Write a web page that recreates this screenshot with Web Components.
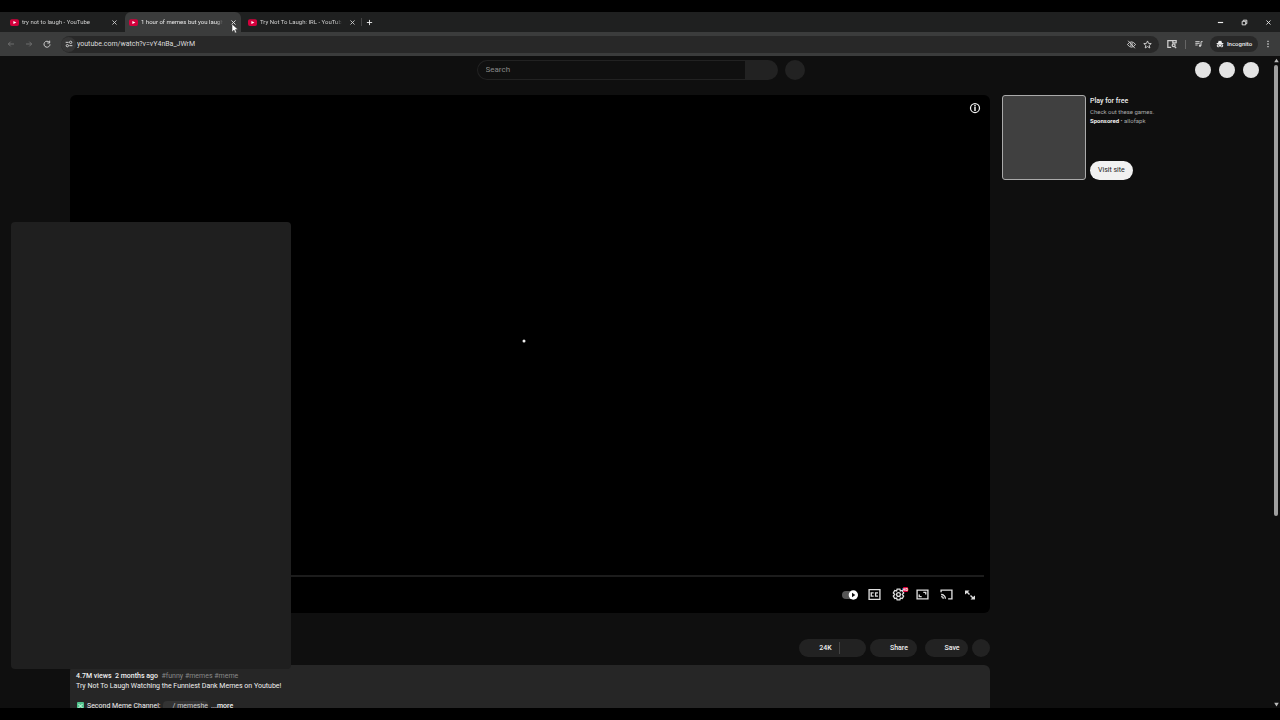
<!DOCTYPE html>
<html lang="en">
<head>
<meta charset="utf-8">
<title>Browser window</title>
<style>
html, body { margin: 0; height: 100%; background: #000; }
body { font-family: Roboto, "Liberation Sans", sans-serif; color: #f1f1f1; }
</style>
</head>
<body>
<browser-window></browser-window>
<script>
const define = (name, html, setup) => customElements.define(name, class extends HTMLElement {
  connectedCallback() {
    if (this.shadowRoot) return;
    const t = document.createElement('template');
    t.innerHTML = html;
    this.attachShadow({ mode: 'open' }).append(t.content.cloneNode(true));
    if (setup) setup(this, this.shadowRoot);
  }
});

const stroke = (d, w = 2) => `<path d="${d}" fill="none" stroke="currentColor" stroke-width="${w}"/>`;
const fill = d => `<path d="${d}" fill="currentColor" fill-rule="evenodd"/>`;
const ICONS = {
  youtube: '<rect x="0" y="3" width="24" height="18" rx="5" fill="#d4003c"/><path d="M9 8l8 4-8 4z" fill="#fff"/>',
  close: stroke('M5 5l14 14M19 5L5 19', 3),
  plus: stroke('M12 3v18M3 12h18', 3),
  minimize: stroke('M3 12h18', 4),
  restore: stroke('M4 8h12v12H4zM8 7V4h12v12h-3', 3),
  back: stroke('M21 12H4M11 5l-7 7 7 7', 2.5),
  forward: stroke('M3 12h17M13 5l7 7-7 7', 2.5),
  reload: stroke('M19 7a9 9 0 1 0 2 6M20 2v7h-7', 3),
  tune: stroke('M2 7h9M13 17h9', 3) + '<g fill="none" stroke="currentColor" stroke-width="3"><circle cx="17" cy="7" r="3.5"/><circle cx="7" cy="17" r="3.5"/></g>',
  eyeoff: stroke('M1 12q11-14 22 0-11 14-22 0zM3 2l18 20', 2.5) + '<circle cx="12" cy="12" r="3.5" fill="none" stroke="currentColor" stroke-width="2"/>',
  star: stroke('M12 2.5l2.8 6.5 7.2.6-5.5 4.7 1.7 7L12 17.5l-6.2 3.8 1.7-7L2 9.600l7.200-.6z', 2.5),
  lens: stroke('M10 20H2V4h20v6M14 4v5h8', 3) + '<circle cx="16" cy="15" r="3.5" fill="none" stroke="currentColor" stroke-width="3"/>' + stroke('M18 18l4 4', 3),
  media: stroke('M1 5h13M1 10h13M1 15h7M18 17V5h5', 3) + '<circle cx="15" cy="17" r="3.5" fill="currentColor"/>',
  incognito: fill('M8 2l4 1 4-1 2 7h4v3H2V9h4zM7 13a4.500 4.500 0 1 0 4 6h2a4.500 4.500 0 1 0 4-6zM7 15.500a2 2 0 1 1 0 4 2 2 0 0 1 0-4zm10 0a2 2 0 1 1 0 4 2 2 0 0 1 0-4z'),
  menu: fill('M10 2h4v4h-4zM10 10h4v4h-4zM10 18h4v4h-4z'),
  info: '<circle cx="12" cy="12" r="9" fill="none" stroke="currentColor" stroke-width="2.5"/>' + fill('M10.500 10h3v8h-3zM10.500 6h3v3h-3z'),
  autoplay: '<rect x="0" y="6" width="22" height="12" rx="6" fill="#555"/><circle cx="17" cy="12" r="7" fill="#fff"/><path d="M15 8.500l5 3.500-5 3.500z" fill="#111"/>',
  cc: stroke('M2 3h20v18H2z', 2.5) + stroke('M10.500 9H6v6h4.500M18.500 9H14v6h4.500', 2.5),
  gear: stroke('M9.500 2h5l1 3.500 3.500-1 2.500 4.500-2.500 3 2.500 3-2.500 4.500-3.500-1-1 3.500h-5l-1-3.500-3.500 1L2.500 15 5 12 2.500 9 5 4.500l3.500 1z', 2.5) + '<circle cx="12" cy="12" r="3.5" fill="none" stroke="currentColor" stroke-width="2.5"/>',
  theater: stroke('M2 4h20v16H2z', 2.5) + stroke('M18 12V8h-4.500M6 12v4h4.500', 2.5),
  cast: stroke('M2 8V4h20v16h-7M2 12a8 8 0 0 1 8 8M2 16a4 4 0 0 1 4 4', 2.5),
  full: fill('M2 3h9l-3 3 4 4-2 2-4-4-4 3zM22 21h-9l3-3-4-4 2-2 4 4 4-3z'),
  up: fill('M12 3l11 17H1z'),
  down: fill('M1 4h22L12 21z')
};
define('ui-icon', `<style>:host{display:block;flex:none;width:var(--size,10px);height:var(--size,10px)}svg{display:block;width:100%;height:100%}</style><svg viewBox="0 0 24 24" aria-hidden="true"></svg>`,
  (h, r) => { r.querySelector('svg').innerHTML = ICONS[h.getAttribute('name')]; });

const RESET = `button{appearance:none;border:0;margin:0;padding:0;background:none;color:inherit;font:inherit;display:flex;align-items:center;justify-content:center;flex:none}`;

define('icon-button', `<style>:host{display:flex;flex:none;width:24px;height:20px}${RESET}button{width:100%;height:100%}</style><button type="button"></button>`,
  (h, r) => {
    const button = r.querySelector('button');
    button.innerHTML = `<ui-icon name="${h.getAttribute('name')}"></ui-icon>`;
    button.setAttribute('aria-label', h.getAttribute('label'));
  });

define('browser-tab', `<style>
:host{display:grid;grid-template-columns:9px 82px 12px;column-gap:3px;align-items:center;box-sizing:border-box;flex:0 1 116px;margin-right:3px;padding-left:4px;height:100%;color:#d0d0d0;font-size:6px;line-height:12px;border-radius:6px 6px 0 0;position:relative}
:host([active]){background:#3b3c3c;color:#e8e8e8}
ui-icon{--size:9px}.title{overflow:hidden;white-space:nowrap;-webkit-mask-image:linear-gradient(90deg,#000 92%,transparent)}
icon-button{width:14px;--size:7px}
slot[name=pointer]::slotted(*){position:absolute;left:106px;top:11px}
</style><ui-icon name="youtube"></ui-icon><span class="title"><slot></slot></span><icon-button name="close" label="Close tab"></icon-button><slot name="pointer"></slot>`);

define('mouse-pointer', `<style>:host{display:block;width:8px;height:11px;z-index:4}svg{display:block}</style><svg width="8" height="11" viewBox="0 0 8 11"><path d="M1 1v8l2-2 1 3 1.500-.6L4.500 6.500h2.500z" fill="#fff" stroke="#333" stroke-width=".5"/></svg>`);

define('tab-strip', `<style>
:host{display:flex;height:20px;flex:none;background:#1f2020;padding-left:6px;align-items:center}
i{width:1px;height:8px;background:#444;margin-left:-2px}.controls{margin-left:auto;display:flex;color:#eee}
icon-button{--size:7px}.new{width:15px}
</style><browser-tab>try not to laugh - YouTube</browser-tab><browser-tab active>1 hour of memes but you laugh you lose<mouse-pointer slot="pointer"></mouse-pointer></browser-tab><browser-tab>Try Not To Laugh: IRL - YouTube</browser-tab><i></i><icon-button class="new" name="plus" label="New tab"></icon-button>
<div class="controls"><icon-button name="minimize" label="Minimize"></icon-button><icon-button name="restore" label="Restore"></icon-button><icon-button name="close" label="Close"></icon-button></div>`);

define('browser-toolbar', `<style>
:host{display:flex;height:24px;flex:none;align-items:center;background:#3b3c3c;color:#d0d0d0;box-sizing:border-box;padding:0 2px}
${RESET}
icon-button{width:18px;--size:8px}.dim{color:#777}
.address{display:flex;align-items:center;flex:1;height:17px;border-radius:9px;background:#282828;margin-left:5px;padding-right:4px;min-width:0}
.address .site{width:15px;height:15px;border-radius:50%;background:#363636;--size:8px}
.address icon-button{width:16px;--size:9px}
input{flex:1;min-width:0;border:0;padding:0;margin-left:1px;background:none;outline:0;font:7px/15px Roboto,sans-serif;color:#ddd}
.side{margin-left:4px;--size:10px}.sep{width:1px;height:9px;background:#666;margin:0 4px}
.chip{width:48px;height:16px;border-radius:8px;background:#282828;gap:3px;font-size:6px;line-height:14px;font-weight:500;color:#eee;margin-left:2px;--size:8px}
.menu{width:20px}
</style>
<icon-button class="dim" name="back" label="Back"></icon-button><icon-button class="dim" name="forward" label="Forward"></icon-button><icon-button name="reload" label="Reload"></icon-button>
<div class="address"><icon-button class="site" name="tune" label="Site information"></icon-button><input type="text" aria-label="Address" value="youtube.com/watch?v=vY4nBa_JWrM" spellcheck="false"><icon-button name="eyeoff" label="Tracking protection"></icon-button><icon-button name="star" label="Bookmark"></icon-button></div>
<icon-button class="side" name="lens" label="Search page"></icon-button><span class="sep"></span><icon-button name="media" label="Media"></icon-button><button class="chip" type="button"><ui-icon name="incognito"></ui-icon>Incognito</button><icon-button class="menu" name="menu" label="Menu"></icon-button>`);

define('page-masthead', `<style>
:host{display:grid;grid-template-columns:1fr minmax(0,328px) 1fr;height:27px;align-items:center;padding:0 14px 0 22px;flex:none}
${RESET}
form{display:flex;grid-column:2;margin:0;align-items:center}
input{flex:1;min-width:0;box-sizing:border-box;height:20px;border:1px solid #222;border-right:0;border-radius:10px 0 0 10px;background:#101010;padding:0 8px;font:8px/16px Roboto,sans-serif;color:#eee;outline:0}
input::placeholder{color:#888;opacity:1}
.go{width:33px;height:20px;background:#222;border-radius:0 10px 10px 0}
.mic{width:20px;height:20px;border-radius:50%;background:#222;margin-left:7px}
nav{justify-self:end;display:flex;gap:8px}nav button{width:16px;height:16px;border-radius:50%;background:#e4e4e4}
</style><form><input type="search" placeholder="Search" aria-label="Search"><button class="go" type="button" aria-label="Submit search"></button><button class="mic" type="button" aria-label="Voice search"></button></form><nav><button type="button" aria-label="Create"></button><button type="button" aria-label="Notifications"></button><button type="button" aria-label="Account"></button></nav>`);

define('video-player', `<style>
:host{display:grid;grid-template-rows:26px 1fr 2px 36px;aspect-ratio:16/9;background:#000;border-radius:6px;overflow:hidden}
.top{display:flex;justify-content:flex-end;padding-right:3px;align-items:center;--size:12px}
.stage{display:grid;place-items:center}
.stage svg{display:block;margin:0 12px 14px 0}
.bar{margin:0 6px;background:#1c1c1c}
.controls{display:flex;justify-content:flex-end;align-items:center;padding-right:8px;--size:13px;color:#ddd}
.auto{--size:16px}.full{--size:12px}
.settings{position:relative}.settings b{position:absolute;right:2px;top:2px;background:#e0003c;color:#fff;font-size:4px;line-height:5px;border-radius:1px}
</style><div class="top"><icon-button name="info" label="Info"></icon-button></div><div class="stage"><svg width="4" height="4"><circle cx="2" cy="2" r="1.5" fill="#eee"/></svg></div><div class="bar"></div>
<div class="controls"><icon-button class="auto" name="autoplay" label="Autoplay"></icon-button><icon-button name="cc" label="Subtitles"></icon-button><span class="settings"><icon-button name="gear" label="Settings"></icon-button><b>HD</b></span><icon-button name="theater" label="Theater mode"></icon-button><icon-button name="cast" label="Cast"></icon-button><icon-button class="full" name="full" label="Full screen"></icon-button></div>`);

define('video-actions', `<style>
:host{display:flex;justify-content:flex-end;margin:26px 0 8px;font-size:7px;font-weight:500;line-height:18px}
${RESET}
button{height:18px;background:#222;border-radius:9px;color:#eee}
.like{width:40px;border-radius:9px 0 0 9px;padding-left:13px;box-sizing:border-box}.dislike{width:27px;border-radius:0 9px 9px 0;position:relative}
.dislike::before{content:"";position:absolute;left:0;top:3px;bottom:3px;width:1px;background:#444}
.share,.save,.more{box-sizing:border-box}
.share{width:47px;margin-left:4px;padding-left:11px}.save{width:43px;margin-left:8px;padding-left:11px}.more{width:18px;margin-left:4px}
</style><button class="like" type="button">24K</button><button class="dislike" type="button" aria-label="Dislike"></button><button class="share" type="button">Share</button><button class="save" type="button">Save</button><button class="more" type="button" aria-label="More"></button>`);

define('video-description', `<style>
:host{display:block;background:#262626;border-radius:6px;padding:6px 6px 12px;font-size:7px;line-height:10px}
p{margin:0;white-space:nowrap}b{font-weight:500}a{color:#888;text-decoration:none}
.last{margin-top:10px;display:flex;align-items:center}
.last svg{margin-right:2px}.last a{color:#ccc;background:#333;margin:0 3px 0 2px;padding-left:10px;border-radius:4px}
</style><p><b>4.7M views&nbsp; 2 months ago</b>&nbsp; <a href="#funny">#funny</a> <a href="#memes">#memes</a> <a href="#meme">#meme</a></p><p>Try Not To Laugh Watching the Funniest Dank Memes on Youtube!</p><p class="last"><svg width="9" height="8" viewBox="0 0 9 8"><rect x="1" width="7" height="8" rx="1" fill="#4fc28c"/><path d="M2.500 2l4 4m0-4l-4 4" stroke="#d9fbe9"/></svg>Second Meme Channel: <a href="#channel">/ memeshe</a><b>...more</b></p>`);

define('sponsored-card', `<style>
:host{display:grid;grid-template-columns:84px 1fr;column-gap:4px;height:85px;font-size:6px;line-height:9px;color:#aaa}
.thumb{background:#404040;border:1px solid #aaa;border-radius:3px;box-sizing:border-box}
.copy{display:flex;flex-direction:column;align-items:flex-start}
h3{margin:0;font-size:7px;line-height:12px;font-weight:500;color:#f1f1f1}p{margin:0;white-space:nowrap}b{color:#f1f1f1;font-weight:700}
a{margin-top:auto;height:19px;line-height:19px;border-radius:10px;padding:0 8px;background:#f1f1f1;color:#222;font-size:7px;text-decoration:none}
</style><div class="thumb"></div><div class="copy"><h3>Play for free</h3><p>Check out these games.</p><p><b>Sponsored</b> • allofapk</p><a href="#visit">Visit site</a></div>`);

define('page-scrollbar', `<style>:host{display:flex;flex-direction:column;align-items:center;width:6px;padding:2px 0 1px;box-sizing:border-box;color:#bbb;--size:5px}
.track{flex:1;width:4px;margin:2px 0}.thumb{height:71%;background:#9f9f9f;border-radius:2px}</style><ui-icon name="up"></ui-icon><div class="track"><div class="thumb"></div></div><ui-icon name="down"></ui-icon>`);

define('floating-panel', `<style>:host{display:block;background:#1f1f1f;border-radius:4px}</style><slot></slot>`);

define('watch-page', `<style>
:host{display:grid;grid-template-columns:minmax(0,1fr) 6px;padding-right:1px;background:#0f0f0f;flex:1;min-height:0;overflow:hidden;position:relative}
.content{overflow:hidden;min-height:0}
main{display:grid;grid-template-columns:minmax(0,1fr) 202px;gap:12px;padding:12px 69px 0 70px;align-items:start}
floating-panel{position:absolute;left:11px;top:166px;width:280px;bottom:39px}
</style><div class="content"><page-masthead></page-masthead><main><section><video-player></video-player><video-actions></video-actions><video-description></video-description></section><aside><sponsored-card></sponsored-card></aside></main></div><page-scrollbar></page-scrollbar><floating-panel></floating-panel>`);

define('browser-window', `<style>:host{display:flex;flex-direction:column;height:100vh;box-sizing:border-box;padding:12px 0;background:#000;overflow:hidden}
browser-toolbar,tab-strip{z-index:1}tab-strip{z-index:2}</style><tab-strip></tab-strip><browser-toolbar></browser-toolbar><watch-page></watch-page>`);
</script>
</body>
</html>
